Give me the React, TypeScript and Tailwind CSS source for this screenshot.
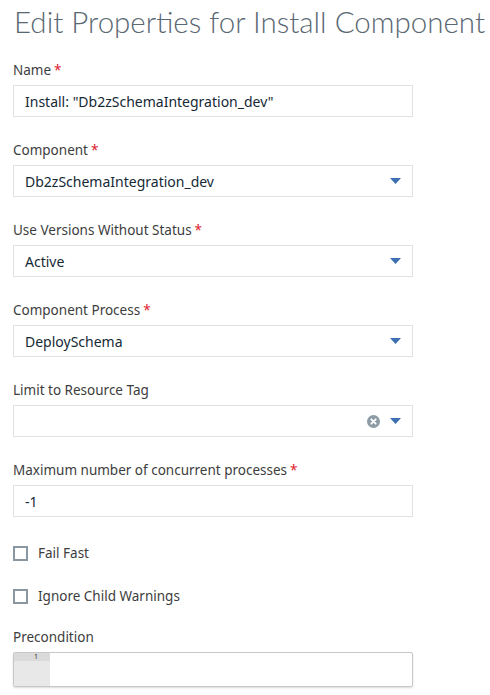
import type { ReactNode } from "react";

const font = { fontFamily: '"Noto Sans", "Open Sans", Arial, sans-serif' };
const titleFont = { fontFamily: 'Lato, "Noto Sans", Arial, sans-serif' };

function Label(props: { text: string; required?: boolean }) {
  return (
    <div className="flex h-5 items-center text-[13.5px] leading-5 text-[#3d3d3d]">
      <span>{props.text}</span>
      {props.required ? <span className="ml-[3px] text-[#e0182d]">*</span> : null}
    </div>
  );
}

function Caret() {
  return (
    <svg width="11" height="6" viewBox="0 0 11 6" className="shrink-0">
      <path d="M0 0 H11 L5.5 6 Z" fill="#3d70b2" />
    </svg>
  );
}

function Box(props: { children?: ReactNode; select?: boolean; clear?: boolean }) {
  return (
    <div className="mt-[5px] flex h-8 w-[400px] items-center border border-[#dfe3e6] bg-white pl-[11px] pr-[11px] text-[14px] text-[#152935]">
      <div className="flex-1 truncate">{props.children}</div>
      {props.clear ? (
        <svg width="13" height="13" viewBox="0 0 13 13" className="mr-[10px] shrink-0">
          <circle cx="6.5" cy="6.5" r="6.5" fill="#8c9ba5" />
          <path d="M4.3 4.3 L8.7 8.7 M8.7 4.3 L4.3 8.7" stroke="#fff" strokeWidth="1.8" strokeLinecap="round" />
        </svg>
      ) : null}
      {props.select ? <Caret /> : null}
    </div>
  );
}

function Field(props: { label: string; required?: boolean; value?: string; select?: boolean; clear?: boolean }) {
  return (
    <div className="mb-[23px]">
      <Label text={props.label} required={props.required} />
      <Box select={props.select} clear={props.clear}>
        {props.value}
      </Box>
    </div>
  );
}

function Check(props: { label: string }) {
  return (
    <div className="flex h-5 items-center">
      <div className="h-[15px] w-[15px] border-2 border-[#8897a2] bg-white" />
      <span className="ml-[10px] text-[13.5px] text-[#3d3d3d]">{props.label}</span>
    </div>
  );
}

export default function App() {
  return (
    <div className="h-[695px] w-[490px] overflow-hidden bg-white pl-[13px]" style={font}>
      <h1
        className="h-[60px] whitespace-nowrap pl-[1px] pt-[2px] text-[29.5px] font-light leading-[40px] text-[#5a6872]"
        style={titleFont}
      >
        Edit Properties for Install Component
      </h1>

      <Field label="Name" required value={'Install: "Db2zSchemaIntegration_dev"'} />
      <Field label="Component" required value="Db2zSchemaIntegration_dev" select />
      <Field label="Use Versions Without Status" required value="Active" select />
      <Field label="Component Process" required value="DeploySchema" select />
      <Field label="Limit to Resource Tag" select clear />
      <Field label="Maximum number of concurrent processes" required value="-1" />

      {/* margins collapse with the field's mb, so this one has to be the full gap */}
      <div className="mt-[26px]">
        <Check label="Fail Fast" />
      </div>
      <div className="mt-[23px]">
        <Check label="Ignore Child Warnings" />
      </div>

      <div className="mt-[21px]">
        <Label text="Precondition" />
        <div className="mt-[5px] flex h-[35px] w-[400px] overflow-hidden rounded-[2px] border border-[#c8c8c8] bg-white shadow-[0_1px_2px_rgba(0,0,0,0.15)]">
          <div className="flex w-[36px] flex-col bg-[#e8e8e8]">
            <div className="flex h-[8px] items-center justify-end bg-[#dadada] pr-[12px] text-[7px] leading-[8px] text-[#333]">
              1
            </div>
          </div>
          <div className="flex-1" />
        </div>
      </div>
    </div>
  );
}
